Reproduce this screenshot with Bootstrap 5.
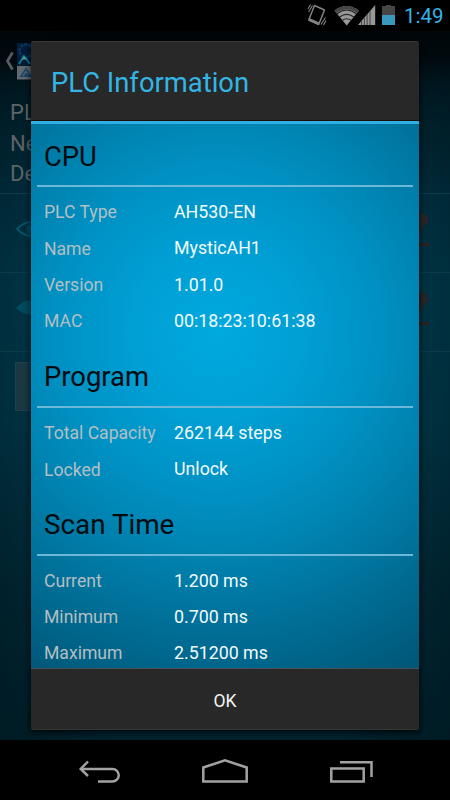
<!DOCTYPE html>
<html lang="en">
<head>
<meta charset="utf-8">
<meta name="viewport" content="width=device-width, initial-scale=1">
<title>PLC Information</title>
<link rel="stylesheet" href="https://cdn.jsdelivr.net/npm/bootstrap@5.3.0/dist/css/bootstrap.min.css">
<style>
body{font-family:Roboto,"Liberation Sans",sans-serif;background:#000;line-height:1}
.phone{width:450px;height:800px;background:#000}
.status-strip{height:31px;padding-right:7px}
.clock{width:39px;font-size:20.5px;color:#33b5e5;line-height:33px;margin-left:5px}
.app-screen{height:709px;background:linear-gradient(90deg,rgba(0,10,16,.35),transparent 25%,transparent 75%,rgba(0,10,16,.35)),linear-gradient(#000507 0,#00090d 26px,#001c26 54px,#002733 90px,#00384a 170px,#004356 260px,#003f51 390px,#002d3a 560px,#00232e 709px)}
.action-strip{height:60px;padding:10px 0 0 4px}
.device-lines{height:102px;padding:7px 0 0 10px;font-size:22px;line-height:30.5px;color:#5d6466}
.device-row{height:79px;border-top:1px solid #0d3b49;padding:23px 20px 0 15px}
.device-row.last-row{border-bottom:1px solid #0d3b49;height:80px}
.handset{margin-top:-7px}
.ghost-btn{width:200px;height:49px;margin:10px 0 0 15px;background:#1a3843;border:1px solid #23404a;border-radius:1px}
.nav-strip{height:60px;padding:4px 77px 0 78px}
.dialog-box{left:31px;top:41px;width:388px;height:689px;border-radius:3px;background:#282828;box-shadow:0 2px 6px 1px rgba(0,0,0,.7)}
.dialog-title{height:80px;padding:6px 0 0 20px;font-size:27.4px;color:#33b5e5;border-top:1px solid #383838;border-bottom:1px solid #1c0d0a;border-radius:3px 3px 0 0}
.dialog-content{height:548px;border-top:3px solid #2fb0e2;border-bottom:1px solid #45545c;background:radial-gradient(ellipse 390px 400px at 186px 208px,#00a9df 0,#009fd4 22%,#0090c2 42%,#0079a4 65%,#00658a 84%,#005474 100%)}
.section-head{height:68px;margin:0 6px;padding:12px 0 0 7px;border-bottom:2px solid #6db8d8;font-size:27.4px;line-height:50px;color:#000a0f}
.section-head.first-head{height:63px;padding-top:8px}
.section-head.scan-head{height:67px;padding-top:11px;font-size:27.8px}
.section-rows{padding:7px 0 1px 13px}
.info-line{height:36.25px;font-size:17.8px}
.info-line dt{width:130px;padding-top:2px;font-weight:400;font-size:17.6px;color:#b4bfc3}
.info-line dd{color:#f4fafc;font-weight:400}
.ok-btn{height:61px;color:#f3f3f3;font-size:17.5px;border-radius:0 0 3px 3px;border-bottom:1px solid #343434!important;padding-top:7px}
</style>
<script src="https://cdn.jsdelivr.net/npm/bootstrap@5.3.0/dist/js/bootstrap.bundle.min.js"></script>
</head>
<body class="m-0 overflow-hidden">
<div class="phone position-relative overflow-hidden d-flex flex-column">
  <header class="status-strip d-flex justify-content-end align-items-start">
    <svg width="94" height="31" viewBox="305 0 94 31">
      <g fill="none" stroke="#828282">
        <path d="M314.5 5.500 324.500 10 318.700 24.500 308.700 20Z" stroke-width="1.500" stroke-linejoin="round"/>
        <path d="M309.300 19.500 318.500 23.500" stroke-width="2.600"/>
        <path d="M308.500 12 312.500 5.500M308 9 310.500 4.500M321 24.500 325.500 17.500M323.500 25 326 20.500" stroke-width="1.100"/>
      </g>
      <path d="M334.500 10.500Q346.500 1.500 359 10.500L346.700 25.500Z" fill="#989898"/>
      <path d="M334.500 10.500Q346.500 1.500 359 10.500L357 13Q346.500 5.500 336.500 13Z" fill="#444"/>
      <path d="M337 13.700Q346.700 6.200 356.400 13.700M339.700 17Q346.700 11.800 353.800 17M342.500 20.200Q346.700 17.200 351 20.200" fill="none" stroke="#222" stroke-width="1.100"/>
      <path d="M358 25 375.200 5V25Z" fill="#989898"/>
      <path d="M361.500 20.500V25M364.300 18V25M367.100 14V25M370 11V25" stroke="#444" stroke-width="1"/>
      <path d="M382 6H386V5H391V6H395V25H382Z" fill="#464646"/>
      <path d="M382 15H395V25H382Z" fill="#3999bd"/>
    </svg>
    <span class="clock">1:49</span>
  </header>

  <main class="app-screen">
    <div class="action-strip d-flex align-items-start">
      <svg width="42" height="42" viewBox="4 41 42 42">
        <path d="M12.500 52.500 7.500 61 12.500 69.500" fill="none" stroke="#555b5d" stroke-width="2.800"/>
        <path d="M17 43H44V66H17Z" fill="#031c38"/>
        <circle cx="26" cy="51" r="6.500" fill="none" stroke="#08375f" stroke-width="2.500" stroke-dasharray="3 1"/>
        <path d="M19 64 24 56 30 64" fill="none" stroke="#147b91" stroke-width="1.800"/>
        <path d="M21.500 59.500 24 56 27 59.500Z" fill="#58939d"/>
        <path d="M17 66H44V79.500H17Z" fill="#62696e"/>
        <path d="M19.500 77 26 67.500 32.500 77Z" fill="#17466b"/>
        <path d="M23 76 26 71.500 28 74" fill="none" stroke="#62696e" stroke-width="1.200"/>
      </svg>
    </div>
    <div class="device-lines"><div>PL</div><div>Ne</div><div>De</div></div>
    <div class="device-row d-flex justify-content-between align-items-start">
      <svg width="34" height="26" viewBox="15 217 34 26"><path d="M17 229Q31 215 46 229Q31 243 17 229Z" fill="none" stroke="#00536a" stroke-width="2"/><circle cx="32" cy="229" r="5.500" fill="#00485c"/></svg>
      <svg class="handset" width="26" height="36" viewBox="404 210 26 36"><path d="M411 213H420Q427.500 213.500 428.500 222L424 225.500 419 235H410Z" fill="#2b2526"/><path d="M405 244.500H429.500" stroke="#33211f" stroke-width="2.600"/></svg>
    </div>
    <div class="device-row last-row d-flex justify-content-between align-items-start">
      <svg width="34" height="26" viewBox="15 217 34 26"><path d="M16 229Q31 213 46 229Q31 243 16 229Z" fill="#004b60"/></svg>
      <svg class="handset" width="26" height="36" viewBox="404 210 26 36"><path d="M411 213H420Q427.500 213.500 428.500 222L424 225.500 419 235H410Z" fill="#2b2526"/><path d="M405 244.500H429.500" stroke="#33211f" stroke-width="2.600"/></svg>
    </div>
    <div class="ghost-btn"></div>
  </main>

  <nav class="nav-strip d-flex justify-content-between align-items-center">
    <svg width="43" height="30" viewBox="78 757 43 30" fill="none" stroke="#a2a2a2" stroke-width="2.500"><path d="M81 769H112.500A6.200 6.200 0 0 1 112.500 781.500H98"/><path d="M88 761.500 80.700 769 88 776"/></svg>
    <svg width="48" height="30" viewBox="201 757 48 30" fill="none" stroke="#a2a2a2" stroke-width="2.500"><path d="M203.300 781.500V767.500L225 760.300 246.700 767.500V781.500Z"/></svg>
    <svg width="45" height="30" viewBox="328 757 45 30" fill="none" stroke="#a2a2a2" stroke-width="2.500"><path d="M331.300 768.500H363.700V781.500H331.300Z"/><path d="M340 762.300H371.500V777"/></svg>
  </nav>

  <section class="dialog-box position-absolute d-flex flex-column" role="dialog" aria-label="PLC Information">
    <div class="dialog-title d-flex align-items-center"><span>PLC Information</span></div>
    <div class="dialog-content overflow-hidden">
      <div class="section-head first-head">CPU</div>
      <dl class="section-rows m-0">
        <div class="info-line d-flex align-items-center"><dt>PLC Type</dt><dd class="m-0">AH530-EN</dd></div>
        <div class="info-line d-flex align-items-center"><dt>Name</dt><dd class="m-0">MysticAH1</dd></div>
        <div class="info-line d-flex align-items-center"><dt>Version</dt><dd class="m-0">1.01.0</dd></div>
        <div class="info-line d-flex align-items-center"><dt>MAC</dt><dd class="m-0">00:18:23:10:61:38</dd></div>
      </dl>
      <div class="section-head">Program</div>
      <dl class="section-rows m-0">
        <div class="info-line d-flex align-items-center"><dt>Total Capacity</dt><dd class="m-0">262144 steps</dd></div>
        <div class="info-line d-flex align-items-center"><dt>Locked</dt><dd class="m-0">Unlock</dd></div>
      </dl>
      <div class="section-head scan-head">Scan Time</div>
      <dl class="section-rows m-0">
        <div class="info-line d-flex align-items-center"><dt>Current</dt><dd class="m-0">1.200 ms</dd></div>
        <div class="info-line d-flex align-items-center"><dt>Minimum</dt><dd class="m-0">0.700 ms</dd></div>
        <div class="info-line d-flex align-items-center"><dt>Maximum</dt><dd class="m-0">2.51200 ms</dd></div>
      </dl>
    </div>
    <button type="button" class="ok-btn w-100 border-0 bg-transparent">OK</button>
  </section>
</div>
</body>
</html>
